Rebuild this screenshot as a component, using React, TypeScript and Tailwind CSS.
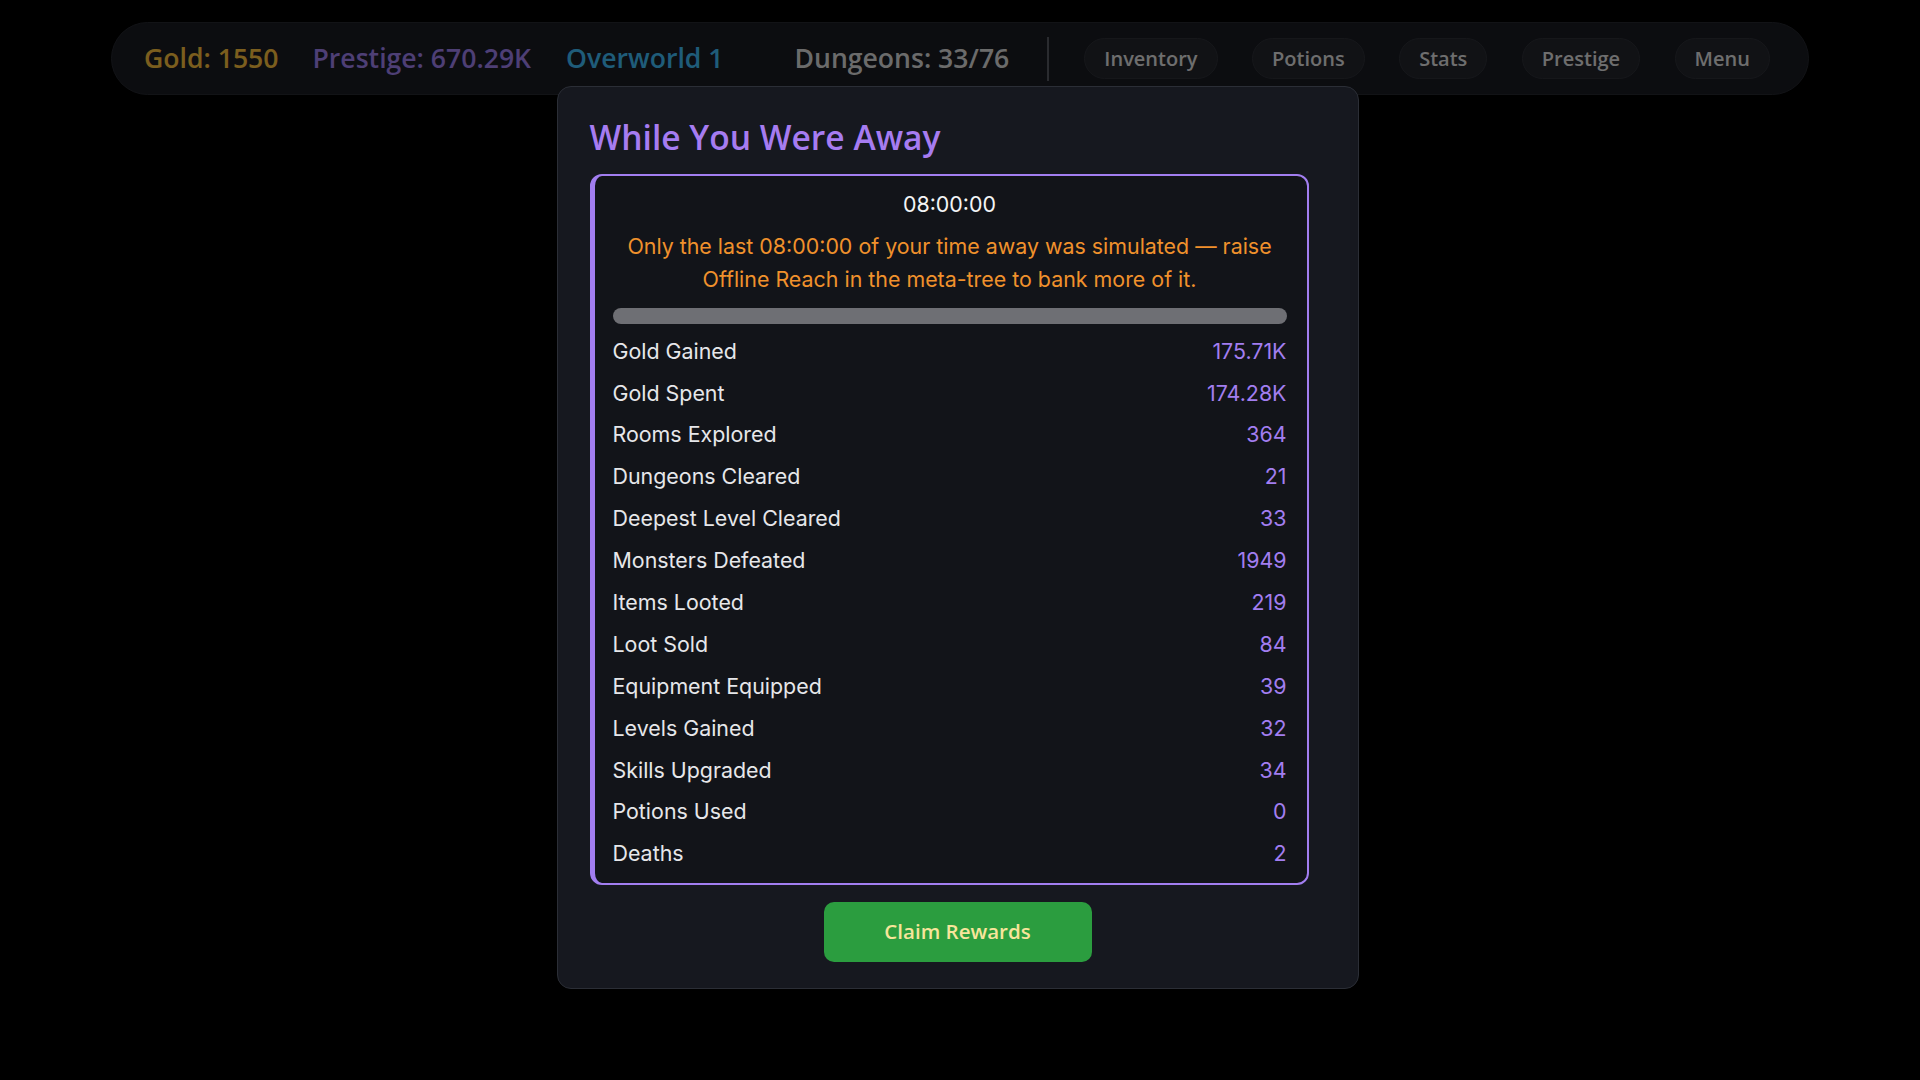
import React from "react";

const stats: [string, string][] = [
  ["Gold Gained", "175.71K"],
  ["Gold Spent", "174.28K"],
  ["Rooms Explored", "364"],
  ["Dungeons Cleared", "21"],
  ["Deepest Level Cleared", "33"],
  ["Monsters Defeated", "1949"],
  ["Items Looted", "219"],
  ["Loot Sold", "84"],
  ["Equipment Equipped", "39"],
  ["Levels Gained", "32"],
  ["Skills Upgraded", "34"],
  ["Potions Used", "0"],
  ["Deaths", "2"],
];

const navButtons = ["Inventory", "Potions", "Stats", "Prestige", "Menu"];

const App = () => {
  return (
    <div className="relative min-h-screen bg-black font-['Open_Sans',sans-serif]">
      {/* top bar */}
      <div className="flex justify-center pt-[22px]">
        <div className="flex h-[73px] w-[1698px] items-center whitespace-nowrap rounded-full border border-[#24262d] bg-[#181a20] pl-[32px] pr-[35px] text-[26.6px] font-semibold">
          <span className="shrink-0 text-[#f6bd3c]">Gold: 1550</span>
          <span className="ml-[34px] shrink-0 text-[#9c7eea]">Prestige: 670.29K</span>
          <span className="ml-[35px] shrink-0 text-[#3eb8f2]">Overworld 1</span>
          <span className="ml-[71px] shrink-0 text-[#d6d6d6]">Dungeons: 33/76</span>
          <div className="ml-[38px] h-[44px] w-[2px] shrink-0 bg-[#55575e]" />
          <div className="ml-[35px] flex shrink-0 gap-[34.5px]">
            {navButtons.map((b) => (
              <button
                key={b}
                className="h-[41px] rounded-full border border-[#2c2e35] bg-[#23252b] px-[19px] text-[20px] font-semibold text-[#dcdcdc]"
              >
                {b}
              </button>
            ))}
          </div>
        </div>
      </div>

      {/* backdrop */}
      <div className="fixed inset-0 bg-black/50" />

      {/* modal */}
      <div className="fixed inset-0 flex items-center justify-center">
        <div className="mb-[5px] mr-[5px] w-[802px] rounded-[14px] border border-[#2b2e36] bg-[#16181f] px-[32px] pb-[26.5px] pt-[32px]">
          <h2 className="mb-[19px] text-[33.6px] font-semibold leading-[36px] text-[#a67cf1]">
            While You Were Away
          </h2>

          <div className="w-[719px] rounded-[12px] border-2 border-l-[5px] border-[#a27ef0] bg-[#121419] pb-[12.5px] pl-[18px] pr-[20px] pt-[12px] font-['Inter',sans-serif] text-[21.4px] leading-[33px]">
            <div className="text-center text-[#f3f4f6]">08:00:00</div>
            <p className="mt-[9px] text-center text-[#f0912c]">
              Only the last 08:00:00 of your time away was simulated — raise
              <br />
              Offline Reach in the meta-tree to bank more of it.
            </p>
            <div className="mt-[12px] h-[16px] w-full rounded-full bg-[#6e6f74]" />
            <div className="mt-[11px] flex flex-col gap-[8.9px]">
              {stats.map(([label, value]) => (
                <div key={label} className="flex justify-between">
                  <span className="text-[#e6e7ea]">{label}</span>
                  <span className="text-[#a27ef0]">{value}</span>
                </div>
              ))}
            </div>
          </div>

          <div className="mt-[17px] flex justify-center">
            <button className="h-[60px] w-[268px] rounded-[10px] bg-[#2b9d3f] text-[20.5px] font-semibold text-[#f7e59b]">
              Claim Rewards
            </button>
          </div>
        </div>
      </div>
    </div>
  );
};

export default App;
